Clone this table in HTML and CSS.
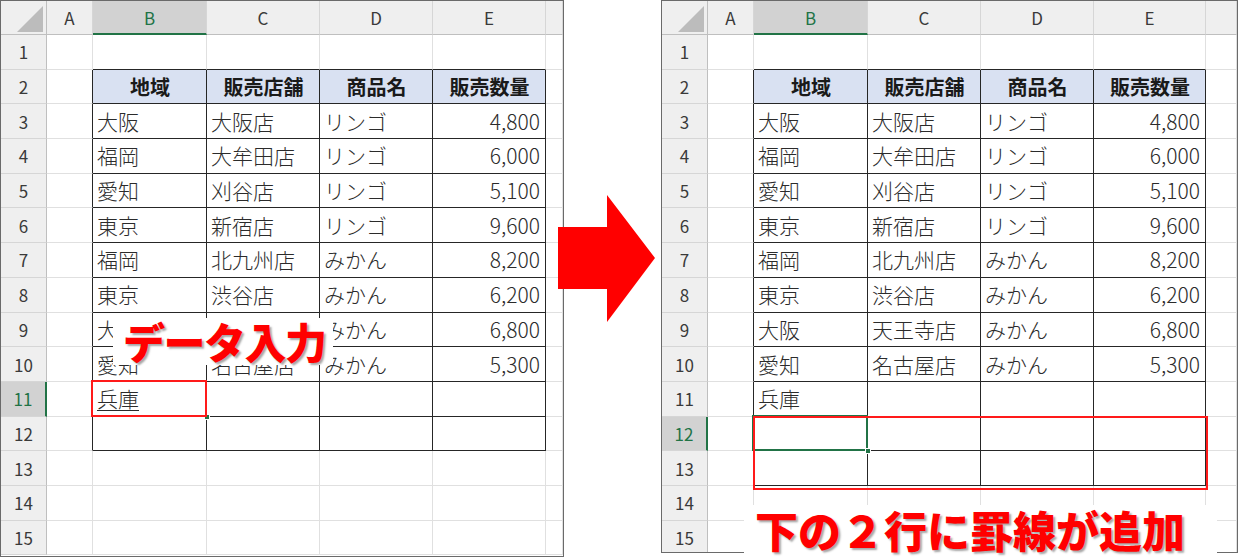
FILE: index.html
```html
<!DOCTYPE html>
<html lang="ja">
<head>
<meta charset="utf-8">
<title>罫線の自動追加</title>
<link rel="stylesheet" href="styles.css">
</head>
<body>
<div class="stage">
  <div class="sheet sheet-left">
    <table class="grid">
      <colgroup><col class="w-rh"><col class="w-a"><col class="w-b"><col class="w-c"><col class="w-d"><col class="w-e"><col class="w-xl"></colgroup>
      <tr class="hdr"><th class="corner"><span class="tri"></span></th><th class="ch">A</th><th class="ch on">B</th><th class="ch">C</th><th class="ch">D</th><th class="ch">E</th><th class="ch"></th></tr>
      <tr><th class="rh">1</th><td></td><td class="tt"></td><td class="tt"></td><td class="tt"></td><td class="tt"></td><td></td></tr>
      <tr><th class="rh">2</th><td class="ta"></td><td class="t h">地域</td><td class="t h">販売店舗</td><td class="t h">商品名</td><td class="t h">販売数量</td><td></td></tr>
      <tr><th class="rh">3</th><td class="ta"></td><td class="t">大阪</td><td class="t">大阪店</td><td class="t">リンゴ</td><td class="t n">4,800</td><td></td></tr>
      <tr><th class="rh">4</th><td class="ta"></td><td class="t">福岡</td><td class="t">大牟田店</td><td class="t">リンゴ</td><td class="t n">6,000</td><td></td></tr>
      <tr><th class="rh">5</th><td class="ta"></td><td class="t">愛知</td><td class="t">刈谷店</td><td class="t">リンゴ</td><td class="t n">5,100</td><td></td></tr>
      <tr><th class="rh">6</th><td class="ta"></td><td class="t">東京</td><td class="t">新宿店</td><td class="t">リンゴ</td><td class="t n">9,600</td><td></td></tr>
      <tr><th class="rh">7</th><td class="ta"></td><td class="t">福岡</td><td class="t">北九州店</td><td class="t">みかん</td><td class="t n">8,200</td><td></td></tr>
      <tr><th class="rh">8</th><td class="ta"></td><td class="t">東京</td><td class="t">渋谷店</td><td class="t">みかん</td><td class="t n">6,200</td><td></td></tr>
      <tr><th class="rh">9</th><td class="ta"></td><td class="t">大阪</td><td class="t">天王寺店</td><td class="t">みかん</td><td class="t n">6,800</td><td></td></tr>
      <tr><th class="rh">10</th><td class="ta"></td><td class="t">愛知</td><td class="t">名古屋店</td><td class="t">みかん</td><td class="t n">5,300</td><td></td></tr>
      <tr><th class="rh on">11</th><td class="ta"></td><td class="t cur"><span class="typing">兵庫</span><span class="redsel"></span><span class="handle"></span></td><td class="t"></td><td class="t"></td><td class="t"></td><td></td></tr>
      <tr><th class="rh">12</th><td class="ta"></td><td class="t"></td><td class="t"></td><td class="t"></td><td class="t"></td><td></td></tr>
      <tr><th class="rh">13</th><td></td><td></td><td></td><td></td><td></td><td></td></tr>
      <tr><th class="rh">14</th><td></td><td></td><td></td><td></td><td></td><td></td></tr>
      <tr><th class="rh">15</th><td></td><td></td><td></td><td></td><td></td><td></td></tr>
    </table>
  </div>

  <div class="sheet sheet-right">
    <table class="grid">
      <colgroup><col class="w-rh"><col class="w-a"><col class="w-b"><col class="w-c"><col class="w-d"><col class="w-e2"><col class="w-xr"></colgroup>
      <tr class="hdr"><th class="corner"><span class="tri"></span></th><th class="ch">A</th><th class="ch on">B</th><th class="ch">C</th><th class="ch">D</th><th class="ch">E</th><th class="ch"></th></tr>
      <tr><th class="rh">1</th><td></td><td class="tt"></td><td class="tt"></td><td class="tt"></td><td class="tt"></td><td></td></tr>
      <tr><th class="rh">2</th><td class="ta"></td><td class="t h">地域</td><td class="t h">販売店舗</td><td class="t h">商品名</td><td class="t h">販売数量</td><td></td></tr>
      <tr><th class="rh">3</th><td class="ta"></td><td class="t">大阪</td><td class="t">大阪店</td><td class="t">リンゴ</td><td class="t n">4,800</td><td></td></tr>
      <tr><th class="rh">4</th><td class="ta"></td><td class="t">福岡</td><td class="t">大牟田店</td><td class="t">リンゴ</td><td class="t n">6,000</td><td></td></tr>
      <tr><th class="rh">5</th><td class="ta"></td><td class="t">愛知</td><td class="t">刈谷店</td><td class="t">リンゴ</td><td class="t n">5,100</td><td></td></tr>
      <tr><th class="rh">6</th><td class="ta"></td><td class="t">東京</td><td class="t">新宿店</td><td class="t">リンゴ</td><td class="t n">9,600</td><td></td></tr>
      <tr><th class="rh">7</th><td class="ta"></td><td class="t">福岡</td><td class="t">北九州店</td><td class="t">みかん</td><td class="t n">8,200</td><td></td></tr>
      <tr><th class="rh">8</th><td class="ta"></td><td class="t">東京</td><td class="t">渋谷店</td><td class="t">みかん</td><td class="t n">6,200</td><td></td></tr>
      <tr><th class="rh">9</th><td class="ta"></td><td class="t">大阪</td><td class="t">天王寺店</td><td class="t">みかん</td><td class="t n">6,800</td><td></td></tr>
      <tr><th class="rh">10</th><td class="ta"></td><td class="t">愛知</td><td class="t">名古屋店</td><td class="t">みかん</td><td class="t n">5,300</td><td></td></tr>
      <tr><th class="rh">11</th><td class="ta"></td><td class="t">兵庫</td><td class="t"></td><td class="t"></td><td class="t"></td><td></td></tr>
      <tr><th class="rh on">12</th><td class="ta"></td><td class="t cur"><span class="greensel"></span><span class="handle"></span></td><td class="t"></td><td class="t"></td><td class="t"></td><td></td></tr>
      <tr><th class="rh">13</th><td class="ta"></td><td class="t"></td><td class="t"></td><td class="t"></td><td class="t"></td><td></td></tr>
      <tr><th class="rh">14</th><td></td><td></td><td></td><td></td><td></td><td></td></tr>
      <tr><th class="rh">15</th><td></td><td></td><td></td><td></td><td></td><td></td></tr>
    </table>
    <div class="redrange"></div>
  </div>

  <div class="note note-left">データ入力</div>
  <div class="note note-right">下の２行に罫線が追加</div>

  <svg class="arrow" width="97" height="127" viewBox="0 0 97 127" aria-hidden="true">
    <polygon points="0,32 49,32 49,0 97,63 49,127 49,94 0,94" fill="#ff0000"/>
  </svg>
</div>
</body>
</html>
```

FILE: styles.css
```css
* { box-sizing: border-box; }

body {
  margin: 0;
  background: #ffffff;
  font-family: "Noto Sans CJK JP", "Noto Sans", sans-serif;
  color: #262626;
}

.stage {
  position: relative;
  display: flex;
  align-items: flex-start;
  width: 1240px;
  height: 558px;
  overflow: hidden;
}

.sheet {
  position: relative;
  border: 1px solid #6a6a6a;
  overflow: hidden;
  background: #ffffff;
}

.sheet-left {
  width: 564px;
  height: 557px;
}

.sheet-right {
  width: 577px;
  height: 553px;
  margin-left: 97px;
}

.grid {
  border-collapse: separate;
  border-spacing: 0;
  table-layout: fixed;
}

.sheet-left .grid { width: 562px; }
.sheet-right .grid { width: 575px; }

.w-rh { width: 46px; }
.w-a { width: 46px; }
.w-b { width: 114px; }
.w-c { width: 113px; }
.w-d { width: 113px; }
.w-e { width: 113px; }
.w-e2 { width: 112px; }
.w-xl { width: 17px; }
.w-xr { width: 31px; }

.grid tr { height: 34.7px; }
.grid tr.hdr { height: 34px; }

.grid td,
.grid th {
  padding: 0;
  white-space: nowrap;
  overflow: hidden;
  vertical-align: middle;
  font-weight: normal;
}

.grid td {
  border-right: 1px solid #e0e0e0;
  border-bottom: 1px solid #e0e0e0;
  padding: 0 3px 0 4px;
  font-size: 21px;
  font-weight: 300;
  line-height: 1;
  color: #2b2b2b;
}

.grid td.ta { border-right-color: #262626; }
.grid td.tt { border-bottom-color: #262626; }
.grid td.t {
  border-right-color: #262626;
  border-bottom-color: #262626;
}

.grid td.h {
  background: #d9e1f2;
  font-weight: bold;
  font-size: 20px;
  text-align: center;
  color: #1a1a1a;
}

.grid td.n {
  text-align: right;
  padding-right: 5px;
}

.grid td.cur { position: relative; overflow: visible; }

.typing {
  text-decoration: underline;
  text-decoration-thickness: 1px;
  text-underline-offset: 3px;
}

.redsel {
  position: absolute;
  left: -2px;
  top: -2px;
  right: -1px;
  bottom: -1px;
  border: 2px solid #ff1a1a;
  z-index: 2;
}

.greensel {
  position: absolute;
  left: -2px;
  top: -2px;
  right: -1px;
  bottom: -1px;
  border: 2px solid #217346;
  z-index: 1;
}

.handle {
  position: absolute;
  right: -4px;
  bottom: -4px;
  width: 6px;
  height: 6px;
  background: #217346;
  border: 1px solid #ffffff;
  z-index: 1;
}

.grid th.corner {
  background: #efefef;
  border-right: 1px solid #bfbfbf;
  border-bottom: 1px solid #bfbfbf;
  vertical-align: top;
}

.tri {
  display: block;
  width: 26px;
  height: 26px;
  margin: 5px 3px 0 auto;
  background: #bcbcbc;
  clip-path: polygon(100% 0, 100% 100%, 0 100%);
}

.grid th.ch {
  background: #efefef;
  border-right: 1px solid #d6d6d6;
  border-bottom: 1px solid #bfbfbf;
  font-size: 17px;
  color: #3a3a3a;
  text-align: center;
}

.grid th.ch.on {
  background: #d2d2d2;
  color: #217346;
  border-bottom: 2px solid #217346;
}

.grid th.rh {
  background: #efefef;
  border-right: 1px solid #bfbfbf;
  border-bottom: 1px solid #d6d6d6;
  font-size: 17px;
  color: #3a3a3a;
  text-align: center;
}

.grid th.rh.on {
  background: #d2d2d2;
  color: #217346;
  border-right: 2px solid #217346;
}

.redrange {
  position: absolute;
  left: 91px;
  top: 415px;
  width: 455px;
  height: 74px;
  border: 2px solid #ff1a1a;
  z-index: 3;
}

.note {
  position: absolute;
  background: #ffffff;
  color: #ff0000;
  font-weight: 900;
  white-space: nowrap;
  text-shadow: 2px 2px 2px rgba(0, 0, 0, 0.35);
  z-index: 5;
}

.note-left {
  left: 113px;
  top: 318px;
  width: 220px;
  height: 47px;
  padding-left: 10px;
  font-size: 42px;
  line-height: 46px;
  letter-spacing: -1.5px;
}

.note-right {
  left: 744px;
  top: 505px;
  width: 473px;
  height: 53px;
  padding-left: 11px;
  font-size: 43px;
  line-height: 48px;
}

.arrow {
  position: absolute;
  left: 558px;
  top: 195px;
  z-index: 6;
}
```
